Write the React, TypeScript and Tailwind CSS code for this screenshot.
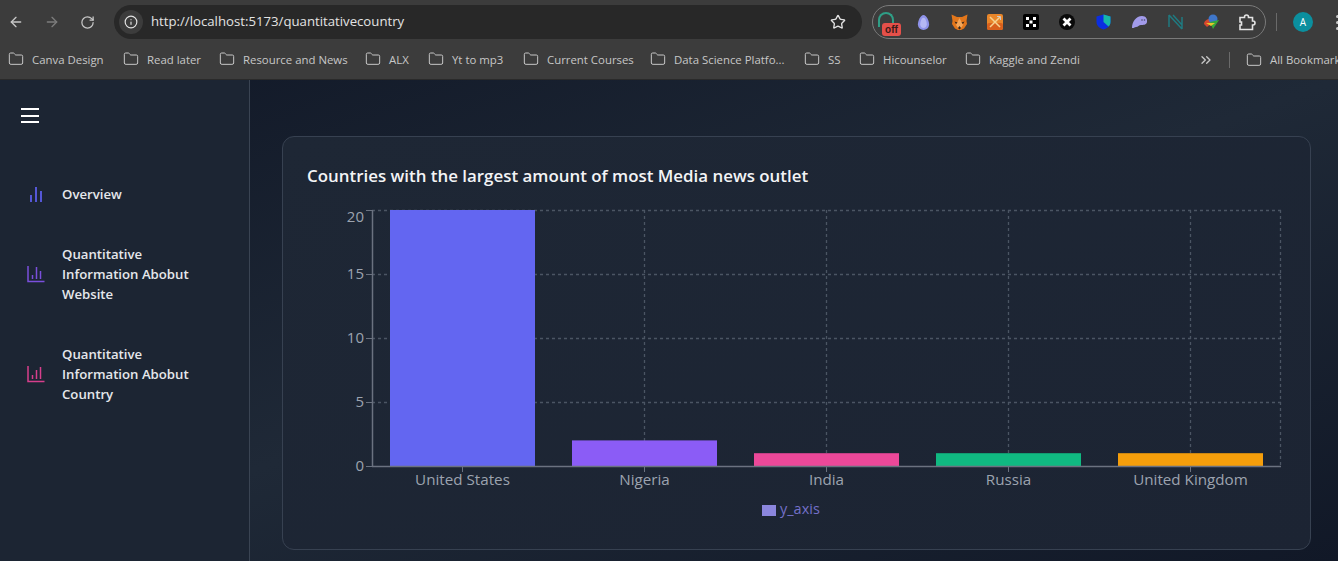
import { ArrowLeft, ArrowRight, RotateCw, Info, Star, Folder, ChevronsRight } from 'lucide-react';

const bookmarks = [
  { name: 'Canva Design', width: 'w-[115px]' },
  { name: 'Read later', width: 'w-[96px]' },
  { name: 'Resource and News', width: 'w-[146px]' },
  { name: 'ALX', width: 'w-[63px]' },
  { name: 'Yt to mp3', width: 'w-[95px]' },
  { name: 'Current Courses', width: 'w-[127px]' },
  { name: 'Data Science Platfo...', width: 'w-[154px]' },
  { name: 'SS', width: 'w-[55px]' },
  { name: 'Hicounselor', width: 'w-[106px]' },
  { name: 'Kaggle and Zendi', width: 'w-[130px]' },
];

const bars = [
  { name: 'United States', x: 390, value: 20, color: '#6366f1' },
  { name: 'Nigeria', x: 572, value: 2, color: '#8b5cf6' },
  { name: 'India', x: 754, value: 1, color: '#ec4899' },
  { name: 'Russia', x: 936, value: 1, color: '#10b981' },
  { name: 'United Kingdom', x: 1118, value: 1, color: '#f59e0b' },
];

const ExtensionIcons = () => (
  <div className="flex h-[34px] w-[394px] shrink-0 items-center rounded-full border border-[#7a7a7a]">
    {/* off badge */}
    <div className="flex w-[32px] shrink-0 justify-center">
      <div className="relative h-[24px] w-[24px]">
        <div className="absolute left-[1px] top-[2px] h-[15px] w-[16px] rounded-t-full border-2 border-b-0 border-[#2f9e86]" />
        <div className="absolute bottom-[-2px] left-[5px] h-[13px] w-[19px] rounded-[3px] bg-[#e5504a] text-center font-['Liberation_Sans',sans-serif] text-[10px] font-bold leading-[13px] text-[#3a1a18]">off</div>
      </div>
    </div>
    <div className="flex w-[36px] shrink-0 justify-center">
      <svg width="13" height="17" viewBox="0 0 14 18"><path d="M7 1C10 1 13 7 13 11C13 15 10 17 7 17C4 17 1 15 1 11C1 7 4 1 7 1Z" fill="#8f93ea" /><path d="M7 4C9 4 10.5 8 10.5 11C10.5 13.500 9 15 7 15C5 15 3.500 13.500 3.500 11C3.500 8 5 4 7 4Z" fill="#b5b8f3" /></svg>
    </div>
    <div className="flex w-[36px] shrink-0 justify-center">
      <svg width="17" height="16" viewBox="0 0 17 16"><path d="M0.500 0.500L6 3H11L16.500 0.500L15.500 7L16 10L13 14.500L10 16H7L4 14.500L1 10L1.500 7Z" fill="#e2761b" /><path d="M5 11L8.500 4L12 11L10 14H7Z" fill="#f2a65a" /><path d="M7 14L8.500 12L10 14L8.500 15.500Z" fill="#33241a" /><path d="M3.500 7.500L6.500 8.500L5 10ZM13.500 7.500L10.500 8.500L12 10Z" fill="#33241a" /></svg>
    </div>
    <div className="flex w-[36px] shrink-0 justify-center">
      <svg width="16" height="16" viewBox="0 0 16 16"><rect width="16" height="16" rx="2" fill="#e8862a" /><rect y="9" width="16" height="7" rx="2" fill="#d9601c" /><path d="M3 3L13 13M13 3L3 13" stroke="#f6d28f" strokeWidth="1.500" /><path d="M10 2.500L13.500 2.500L13.500 6" stroke="#c8c8d0" strokeWidth="1" fill="none" /></svg>
    </div>
    <div className="flex w-[36px] shrink-0 justify-center">
      <svg width="16" height="16" viewBox="0 0 16 16"><rect width="16" height="16" rx="2" fill="#000" /><path d="M3 3h3v3H3zM10 3h3v3h-3zM6.500 6.500h3v3h-3zM3 10h3v3H3zM10 10h3v3h-3z" fill="#fff" /></svg>
    </div>
    <div className="flex w-[36px] shrink-0 justify-center">
      <svg width="16" height="16" viewBox="0 0 16 16"><circle cx="8" cy="8" r="8" fill="#0a0a0a" /><path d="M4.500 4.500L11.500 11.500M11.500 4.500L4.500 11.500" stroke="#fff" strokeWidth="2.800" /></svg>
    </div>
    <div className="flex w-[36px] shrink-0 justify-center">
      <svg width="15" height="16" viewBox="0 0 15 16"><path d="M7.500 0.500L14.500 2.500V8C14.500 12 11 14.500 7.500 15.500C4 14.500 0.500 12 0.500 8V2.500Z" fill="#0b2ee0" /><path d="M7.500 0.500L14.500 2.500V8C14.500 10 13.500 11.500 12.500 12.500L7.500 8Z" fill="#16b6a9" /></svg>
    </div>
    <div className="flex w-[36px] shrink-0 justify-center">
      <svg width="17" height="14" viewBox="0 0 17 14"><path d="M1 13C1 7 5 1 11 1C15 1 16.500 4 16 7C15.500 10 12 10 10 10C8 10 7 12 5 12C3.500 12 3 13.500 1 13Z" fill="#a29bea" /><circle cx="11" cy="5" r="0.800" fill="#4a4a6a" /><circle cx="13.500" cy="5" r="0.800" fill="#4a4a6a" /></svg>
    </div>
    <div className="flex w-[36px] shrink-0 justify-center">
      <svg width="15" height="16" viewBox="0 0 15 16"><path d="M1 1L14 15M1 1V13M5 1L14 11M14 3V15" stroke="#1f7a80" strokeWidth="1.500" fill="none" /></svg>
    </div>
    <div className="flex w-[36px] shrink-0 justify-center">
      <svg width="17" height="16" viewBox="0 0 17 16"><path d="M1 10C1 7 4 5 7 5L9 9L4 13Z" fill="#d8462c" /><circle cx="10" cy="5" r="4.500" fill="#3f76c9" /><path d="M7 8L16 6L10 15Z" fill="#35a83a" /><path d="M3 9L12 9L8 12Z" fill="#e8c52c" /></svg>
    </div>
    <div className="flex w-[36px] shrink-0 justify-center">
      <svg width="18" height="17" viewBox="0 0 18 17" fill="none" stroke="#e3e3e3" strokeWidth="1.600"><path d="M2 3.500H6.500V3A2 2 0 0 1 10.500 3V3.500H14.500V7H15A1.800 1.800 0 0 1 15 11H14.500V15.500H2V11H3.500V8H2Z" /></svg>
    </div>
  </div>
);

const TopBar = () => (
  <div className="flex h-[40px] items-center overflow-hidden bg-[#3c3c3c] pt-[4px]">
    <ArrowLeft className="ml-[8px] shrink-0 text-[#c7c7c7]" size={16} strokeWidth={2} />
    <ArrowRight className="ml-[20px] shrink-0 text-[#7c7c7c]" size={16} strokeWidth={2} />
    <RotateCw className="ml-[20px] shrink-0 text-[#c7c7c7]" size={15} strokeWidth={2} />
    <div className="ml-[19px] flex h-[34px] w-[748px] shrink-0 items-center rounded-full bg-[#282828]">
      <div className="ml-[5px] flex h-[24px] w-[24px] items-center justify-center rounded-full bg-[#3c3c3c]">
        <Info className="text-[#e3e3e3]" size={14} strokeWidth={2} />
      </div>
      <span className="ml-[8px] text-[13.200px] text-[#e3e3e3]">http://localhost:5173/quantitativecountry</span>
      <Star className="ml-auto mr-[16px] text-[#e3e3e3]" size={16} strokeWidth={2} />
    </div>
    <div className="ml-[10px]"><ExtensionIcons /></div>
    <div className="ml-[10px] h-[18px] w-px shrink-0 bg-[#6a6a6a]" />
    <div className="ml-[16px] flex h-[20px] w-[20px] shrink-0 items-center justify-center rounded-full bg-[#0b8f9e] text-[10px] text-white">A</div>
    <div className="ml-[23px] flex shrink-0 flex-col gap-[3px]">
      <span className="h-[3px] w-[3px] rounded-full bg-[#c7c7c7]" />
      <span className="h-[3px] w-[3px] rounded-full bg-[#c7c7c7]" />
      <span className="h-[3px] w-[3px] rounded-full bg-[#c7c7c7]" />
    </div>
  </div>
);

const BookmarkBar = () => (
  <div className="flex h-[40px] items-center overflow-hidden border-b border-[#2a2a2a] bg-[#3c3c3c] pl-[8px] text-[11.400px] text-[#c7c7c7]">
    {bookmarks.map((item) => (
      <div key={item.name} className={`flex shrink-0 items-center ${item.width}`}>
        <Folder size={16} strokeWidth={1.500} />
        <span className="ml-[8px] whitespace-nowrap">{item.name}</span>
      </div>
    ))}
    <ChevronsRight className="ml-[103px] shrink-0" size={16} strokeWidth={2} />
    <div className="ml-[15px] h-[16px] w-px shrink-0 bg-[#6a6a6a]" />
    <Folder className="ml-[16px] shrink-0" size={16} strokeWidth={1.500} />
    <span className="ml-[8px] whitespace-nowrap">All Bookmarks</span>
  </div>
);

const BarIcon = ({ color, framed, d }: { color: string; framed: boolean; d: string }) => (
  <svg width="18" height="18" viewBox="0 0 18 18" fill="none" stroke={color} strokeWidth="1.500">
    {framed && <path d="M1 1V16.500H17.500" />}
    <path d={d} strokeWidth={framed ? 1.5 : 2} />
  </svg>
);

const Sidebar = () => {
  const items = [
    { name: 'Overview', color: '#5457d6', framed: false, d: 'M4 17V10M9 17V2M14 17V6', rowHeight: 'h-[20px]' },
    { name: 'Quantitative Information Abobut Website', color: '#7a4fdc', framed: true, d: 'M5.500 14V10M9.500 14V2M13.500 14V6', rowHeight: 'h-[60px]' },
    { name: 'Quantitative Information Abobut Country', color: '#d63f8c', framed: true, d: 'M5.500 14V10M9.500 14V5M13.500 14V2', rowHeight: 'h-[60px]' },
  ];

  return (
    <aside className="h-[481px] w-[250px] shrink-0 border-r border-[#3a4453] bg-[#1c2533]">
      <div className="flex h-[43px] flex-col justify-end pl-[21px]">
        <div className="flex h-[15px] w-[18px] flex-col justify-between">
          <span className="h-[2px] bg-white" />
          <span className="h-[2px] bg-white" />
          <span className="h-[2px] bg-white" />
        </div>
      </div>
      <nav className="mt-[61px] flex flex-col gap-[40px] pl-[27px]">
        {items.map((item) => (
          <div key={item.color} className={`flex items-center ${item.rowHeight}`}>
            <div className="flex w-[35px] shrink-0">
              <BarIcon color={item.color} framed={item.framed} d={item.d} />
            </div>
            <span className="w-[140px] text-[13.200px] font-semibold leading-[20px] text-[#e5e7eb]">{item.name}</span>
          </div>
        ))}
      </nav>
    </aside>
  );
};

const Chart = () => {
  const top = 210;
  const bottom = 466;
  const yFor = (v: number) => bottom - (v / 20) * (bottom - top);

  return (
    <svg width="1027" height="350" viewBox="283 198 1027 350" className="block">
      {[5, 10, 15, 20].map((v) => (
        <line key={v} x1="372" x2="1281" y1={yFor(v) + 0.5} y2={yFor(v) + 0.5} stroke="#4b5563" strokeWidth="1.300" strokeDasharray="3 3" />
      ))}
      {[644.5, 826.5, 1008.5, 1190.5, 1280.5].map((x) => (
        <line key={x} x1={x} x2={x} y1={top} y2={bottom} stroke="#4b5563" strokeWidth="1.300" strokeDasharray="3 3" />
      ))}
      {bars.map((b) => (
        <rect key={b.name} x={b.x} y={yFor(b.value)} width="145" height={bottom - yFor(b.value)} fill={b.color} />
      ))}
      <line x1="372.500" x2="372.500" y1={top} y2={bottom} stroke="#6b7280" strokeWidth="1.500" />
      <line x1="372" x2="1281" y1={bottom + 0.5} y2={bottom + 0.5} stroke="#6b7280" strokeWidth="1.500" />
      {[0, 5, 10, 15, 20].map((v) => (
        <g key={v}>
          <line x1="366" x2="372" y1={yFor(v) + 0.5} y2={yFor(v) + 0.5} stroke="#6b7280" />
          <text x="364" y={v === 20 ? 222 : yFor(v) + 5} textAnchor="end" fontSize="15" fill="#9ca3af">{v}</text>
        </g>
      ))}
      {bars.map((b) => (
        <g key={b.name}>
          <line x1={b.x + 72.5} x2={b.x + 72.5} y1={bottom} y2={bottom + 6} stroke="#6b7280" />
          <text x={b.x + 72.5} y="485" textAnchor="middle" fontSize="15.200" fill="#9ca3af">{b.name}</text>
        </g>
      ))}
      <rect x="762" y="505" width="14" height="11" fill="#8b86dd" />
      <text x="780" y="514" fontSize="14.500" fill="#7370c8">y_axis</text>
    </svg>
  );
};

export default function App() {
  return (
    <div className="h-[561px] w-[1338px] overflow-hidden font-['Open_Sans','Noto_Sans',sans-serif]">
      <TopBar />
      <BookmarkBar />
      <div className="flex h-[481px] bg-gradient-to-br from-[#111827] via-[#1f2937] to-[#111827]">
        <Sidebar />
        <main className="flex-1 pl-[32px] pr-[27px] pt-[56px]">
          <div className="h-[414px] rounded-[12px] border border-[#374151] bg-gradient-to-br from-[#1e2735] to-[#1c2433]">
            <h2 className="pl-[24px] pt-[27px] text-[16.900px] font-semibold leading-[24px] text-[#f3f4f6]">Countries with the largest amount of most Media news outlet</h2>
            <div className="mt-[10px]">
              <Chart />
            </div>
          </div>
        </main>
      </div>
    </div>
  );
}
